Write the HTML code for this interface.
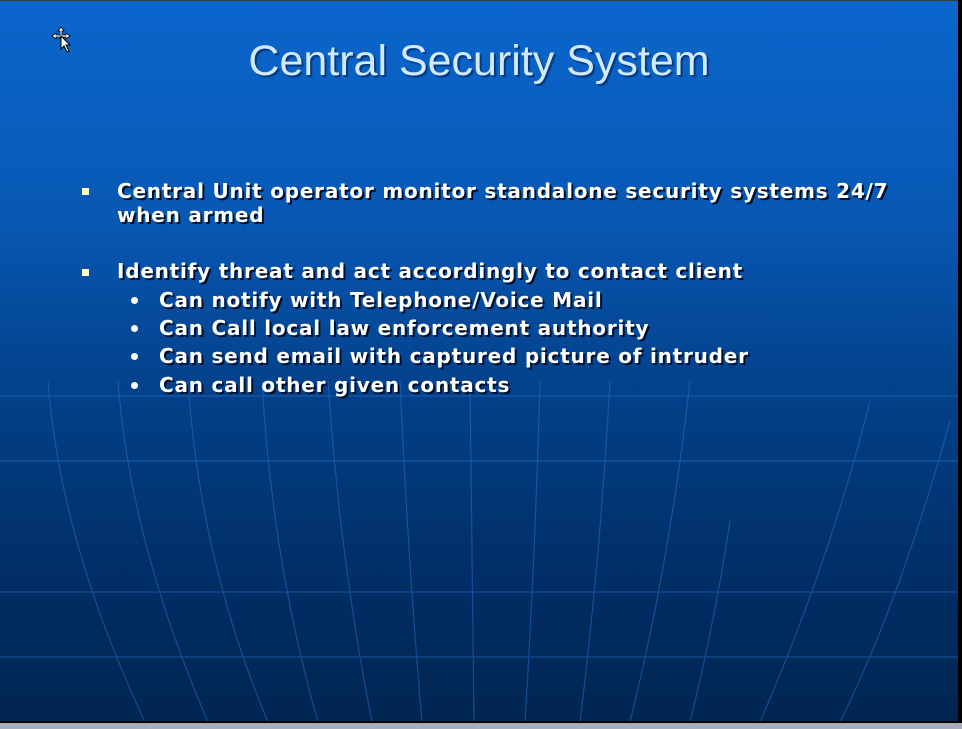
<!DOCTYPE html>
<html><head><meta charset="utf-8"><style>
html,body{margin:0;padding:0;width:962px;height:729px;overflow:hidden;background:#a8acb8;}
#slide{position:absolute;left:0;top:0;width:958px;height:721px;background:linear-gradient(#0b66cc 0%,#0858b4 30%,#034088 55%,#012e66 80%,#012551 100%);overflow:hidden;border-top:1px solid #3a3a3a;box-sizing:border-box;}
#shr{position:absolute;left:958px;top:0;width:4px;height:723px;background:#000;}
#shb{position:absolute;left:0;top:721px;width:962px;height:2px;background:#000;}
svg{position:absolute;left:0;top:0;}
.t{position:absolute;font-family:"DejaVu Sans","Liberation Sans",sans-serif;font-weight:bold;color:#fff;font-size:20px;letter-spacing:0.78px;text-shadow:2px 2px 0 #001030;white-space:nowrap;line-height:24px;}
h1{position:absolute;left:0;width:958px;top:36px;margin:0;text-align:center;font-family:"Liberation Sans",sans-serif;font-weight:normal;font-size:43px;color:#d4e8ff;text-shadow:2px 2px 1px #023a80;}
.sq{position:absolute;width:7px;height:7px;background:#fffbd0;}
.dot{position:absolute;width:7px;height:7px;border-radius:50%;background:#fff;}
</style></head><body>
<div id="slide">
<svg width="958" height="721" viewBox="0 0 958 721">
<g stroke="#2a7ad8" stroke-width="1.2" fill="none" opacity="0.45">
<line x1="0" y1="395" x2="958" y2="395"/>
<line x1="0" y1="460" x2="958" y2="460"/>
<line x1="0" y1="591" x2="958" y2="591"/>
<line x1="0" y1="656" x2="958" y2="656"/>
<path d="M48 380 Q60 540 145 721"/>
<path d="M118 380 Q130 540 208 721"/>
<path d="M188 380 Q200 560 268 721"/>
<path d="M262 380 Q272 560 318 721"/>
<path d="M328 380 Q340 560 372 721"/>
<path d="M400 380 Q408 560 422 721"/>
<path d="M470 380 Q472 560 474 721"/>
<path d="M540 380 Q535 560 525 721"/>
<path d="M610 380 Q600 560 580 721"/>
<path d="M690 380 Q670 560 630 721"/>
<path d="M730 520 Q715 620 690 721"/>
<path d="M870 400 Q830 560 760 721"/>
<path d="M950 420 Q900 600 840 721"/>
</g>
</svg>
<h1>Central Security System</h1>
<div class="sq" style="left:82px;top:187px"></div>
<div class="t" style="left:117px;top:178px">Central Unit operator monitor standalone security systems 24/7<br>when armed</div>
<div class="sq" style="left:82px;top:268px"></div>
<div class="t" style="left:117px;top:258px">Identify threat and act accordingly to contact client</div>
<div class="dot" style="left:131px;top:296px"></div>
<div class="t" style="left:159px;top:287px">Can notify with Telephone/Voice Mail</div>
<div class="dot" style="left:131px;top:324px"></div>
<div class="t" style="left:159px;top:315px">Can Call local law enforcement authority</div>
<div class="dot" style="left:131px;top:352px"></div>
<div class="t" style="left:159px;top:343px">Can send email with captured picture of intruder</div>
<div class="dot" style="left:131px;top:381px"></div>
<div class="t" style="left:159px;top:372px">Can call other given contacts</div>
<svg width="30" height="30" style="left:50px;top:24px" viewBox="0 0 30 30">
<path d="M11 2 L14 6 L12 6 L12 10 L16 10 L16 8 L20 11 L16 14 L16 12 L12 12 L12 14 L10 14 L10 12 L6 12 L6 14 L2 11 L6 8 L6 10 L10 10 L10 6 L8 6 Z" fill="#fff" stroke="#000" stroke-width="0.8"/>
<path d="M11 11 L11 24 L14 21 L17 27 L19 26 L16 20 L20 20 Z" fill="#fff" stroke="#000" stroke-width="1"/>
</svg>
</div>
<div id="shr"></div><div id="shb"></div>
</body></html>
